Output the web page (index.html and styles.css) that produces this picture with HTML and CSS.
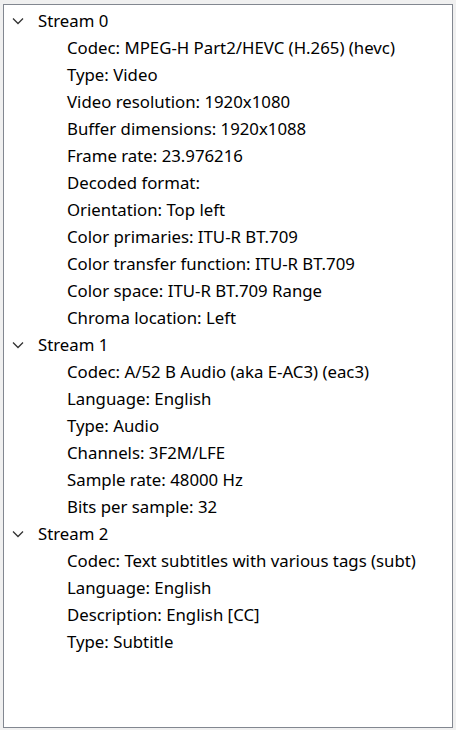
FILE: index.html
```html
<!DOCTYPE html>
<html>
<head>
<meta charset="utf-8">
<link rel="stylesheet" href="styles.css">
</head>
<body>
<div class="tree">
  <div class="node">
    <div class="row parent"><svg class="chev" width="12" height="8" viewBox="0 0 12 8"><path d="M1 1.5 L6 6.5 L11 1.5" fill="none" stroke="#333" stroke-width="1.3"/></svg><span>Stream 0</span></div>
    <div class="row child">Codec: MPEG-H Part2/HEVC (H.265) (hevc)</div>
    <div class="row child">Type: Video</div>
    <div class="row child">Video resolution: 1920x1080</div>
    <div class="row child">Buffer dimensions: 1920x1088</div>
    <div class="row child">Frame rate: 23.976216</div>
    <div class="row child">Decoded format:</div>
    <div class="row child">Orientation: Top left</div>
    <div class="row child">Color primaries: ITU-R BT.709</div>
    <div class="row child">Color transfer function: ITU-R BT.709</div>
    <div class="row child">Color space: ITU-R BT.709 Range</div>
    <div class="row child">Chroma location: Left</div>
  </div>
  <div class="node">
    <div class="row parent"><svg class="chev" width="12" height="8" viewBox="0 0 12 8"><path d="M1 1.5 L6 6.5 L11 1.5" fill="none" stroke="#333" stroke-width="1.3"/></svg><span>Stream 1</span></div>
    <div class="row child">Codec: A/52 B Audio (aka E-AC3) (eac3)</div>
    <div class="row child">Language: English</div>
    <div class="row child">Type: Audio</div>
    <div class="row child">Channels: 3F2M/LFE</div>
    <div class="row child">Sample rate: 48000 Hz</div>
    <div class="row child">Bits per sample: 32</div>
  </div>
  <div class="node">
    <div class="row parent"><svg class="chev" width="12" height="8" viewBox="0 0 12 8"><path d="M1 1.5 L6 6.5 L11 1.5" fill="none" stroke="#333" stroke-width="1.3"/></svg><span>Stream 2</span></div>
    <div class="row child">Codec: Text subtitles with various tags (subt)</div>
    <div class="row child">Language: English</div>
    <div class="row child">Description: English [CC]</div>
    <div class="row child">Type: Subtitle</div>
  </div>
</div>
</body>
</html>
```
FILE: styles.css
```css
html, body {
  margin: 0;
  padding: 0;
  background: #f0f0f0;
}
body {
  padding: 4px 3px 2px 3px;
  width: 456px;
  height: 730px;
  box-sizing: border-box;
}
.tree {
  box-sizing: border-box;
  width: 450px;
  height: 724px;
  background: #ffffff;
  border: 1px solid #828790;
  padding-top: 2px;
  font-family: "Noto Sans", "Open Sans", sans-serif;
  font-size: 16.8px;
  color: #000;
}
.row {
  height: 27px;
  line-height: 27px;
  white-space: nowrap;
}
.parent {
  display: flex;
  align-items: center;
  padding-left: 8px;
}
.chev {
  display: block;
  margin-right: 14px;
}
.child {
  padding-left: 63px;
}
```
